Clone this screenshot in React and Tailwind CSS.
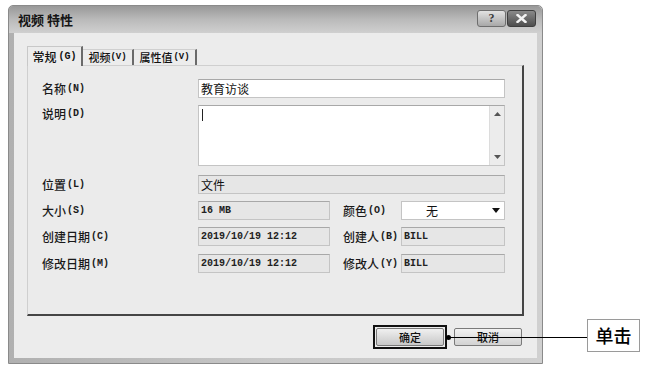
import React from 'react';

const cjk = { fontFamily: '"Noto Sans CJK SC", "Noto Sans", sans-serif' };
const mono = { fontFamily: '"Liberation Mono", "Noto Sans CJK SC", monospace' };

function Label({ text, hint, className = '' }) {
  return (
    <div className={`text-[12px] font-medium text-[#1a1a1a] leading-none flex items-center ${className}`} style={cjk}>
      <span>{text}</span>
      <span className="text-[10px] font-bold ml-[1px]" style={mono}>{hint}</span>
    </div>
  );
}

function Field({ value, white, w, monoText, center }) {
  return (
    <div
      className={`h-[19px] ${w} border border-[#c4c4c4] border-t-[#a8a8a8] flex items-center px-[2px] text-[#111] ${
        white ? 'bg-white' : 'bg-[#e6e6e6]'
      } ${center ? 'justify-center' : ''}`}
      style={monoText ? mono : cjk}
    >
      <span className={monoText ? 'text-[10px] font-bold text-[#222]' : 'text-[12px]'}>{value}</span>
    </div>
  );
}

export default function App() {
  return (
    <div className="relative w-[650px] h-[372px] bg-white overflow-hidden pt-[5px] pl-[8px]">
      {/* dialog window */}
      <div className="w-[535px] h-[359px] flex flex-col border border-[#8a8a8a] rounded-t-[5px] bg-gradient-to-r from-[#b0b0b0] via-[#c8c8c8] to-[#d0d0d0]">
        {/* title bar */}
        <div className="h-[27px] flex items-center justify-between pl-[9px] pr-[6px] rounded-t-[5px] bg-gradient-to-b from-[#989898] via-[#bababa] to-[#d0d0d0]">
          <span className="text-[13px] font-semibold text-[#151515]" style={cjk}>视频 特性</span>
          <div className="flex items-center gap-[1px] mt-[-3px]">
            <div className="w-[29px] h-[17px] rounded-[3px] border border-[#6e6e6e] bg-gradient-to-b from-[#e2e2e2] to-[#a8a8a8] flex items-center justify-center">
              <span className="text-[12px] font-bold text-[#3a3a3a] leading-none" style={{ fontFamily: '"Liberation Serif", serif' }}>?</span>
            </div>
            <div className="w-[29px] h-[17px] rounded-[3px] border border-[#3e3e3e] bg-gradient-to-b from-[#8a8a8a] to-[#4e4e4e] flex items-center justify-center">
              <svg width="11" height="9" viewBox="0 0 11 9">
                <path d="M1.5 1 L9.5 8 M9.5 1 L1.5 8" stroke="#f4f4f4" strokeWidth="2.4" strokeLinecap="square" />
              </svg>
            </div>
          </div>
        </div>

        {/* client area */}
        <div className="flex-1 mx-[5px] mb-[5px] bg-[#ececec] px-[13px] pt-[13px] flex flex-col">
          {/* tabs */}
          <div className="h-[19px] flex items-end" style={cjk}>
            <div className="h-[20px] w-[56px] border-t border-l border-[#c8c8c8] border-r-2 border-r-[#6a6a6a] bg-[#ececec] flex items-center justify-center text-[12px] font-medium text-[#111] mb-[-1px] relative z-10">
              常规<span className="text-[10px] font-bold ml-[2px]" style={mono}>(G)</span>
            </div>
            <div className="h-[16px] w-[51px] border-t border-[#d0d0d0] border-r-2 border-r-[#6a6a6a] flex items-center justify-center text-[11px] font-medium text-[#111]">
              视频<span className="text-[9px] font-bold" style={mono}>(V)</span>
            </div>
            <div className="h-[16px] w-[63px] border-t border-[#d0d0d0] border-r-2 border-r-[#6a6a6a] flex items-center justify-center text-[11px] font-medium text-[#111]">
              属性值<span className="text-[9px] font-bold ml-[1px]" style={mono}>(V)</span>
            </div>
          </div>

          {/* tab panel */}
          <div className="h-[251px] border-l border-t border-[#cfcfcf] border-r-2 border-r-[#454545] border-b-2 border-b-[#454545] bg-[#ebebeb] pl-[14px] pt-[13px] flex flex-col">
            <div className="flex items-center">
              <Label text="名称" hint="(N)" className="w-[156px]" />
              <Field value="教育访谈" white w="w-[307px]" />
            </div>

            <div className="flex items-start mt-[7px]">
              <Label text="说明" hint="(D)" className="w-[156px] pt-[3px]" />
              <div className="w-[307px] h-[61px] bg-white border border-[#c4c4c4] border-t-[#a8a8a8] flex">
                <div className="flex-1 pl-[3px] pt-[3px]">
                  <div className="w-[1px] h-[12px] bg-[#222]" />
                </div>
                <div className="w-[15px] bg-[#ececec] border-l border-[#dcdcdc] flex flex-col items-center justify-between py-[6px]">
                  <svg width="7" height="4" viewBox="0 0 7 4"><path d="M0 4 L3.5 0 L7 4 Z" fill="#555" /></svg>
                  <svg width="7" height="4" viewBox="0 0 7 4"><path d="M0 0 L3.5 4 L7 0 Z" fill="#555" /></svg>
                </div>
              </div>
            </div>

            <div className="flex items-center mt-[9px]">
              <Label text="位置" hint="(L)" className="w-[156px]" />
              <Field value="文件" w="w-[307px]" />
            </div>

            <div className="flex items-center mt-[7px]">
              <Label text="大小" hint="(S)" className="w-[156px]" />
              <Field value="16 MB" w="w-[132px]" monoText />
              <Label text="颜色" hint="(O)" className="w-[58px] ml-[13px]" />
              <div className="w-[104px] h-[19px] bg-white border border-[#c4c4c4] flex items-center justify-between pl-[24px] pr-[4px]">
                <span className="text-[12px] text-[#111]" style={cjk}>无</span>
                <svg width="8" height="5" viewBox="0 0 8 5"><path d="M0 0 L4 5 L8 0 Z" fill="#111" /></svg>
              </div>
            </div>

            <div className="flex items-center mt-[7px]">
              <Label text="创建日期" hint="(C)" className="w-[156px]" />
              <Field value="2019/10/19 12:12" w="w-[132px]" monoText />
              <Label text="创建人" hint="(B)" className="w-[58px] ml-[13px]" />
              <Field value="BILL" w="w-[104px]" monoText />
            </div>

            <div className="flex items-center mt-[8px]">
              <Label text="修改日期" hint="(M)" className="w-[156px]" />
              <Field value="2019/10/19 12:12" w="w-[132px]" monoText />
              <Label text="修改人" hint="(Y)" className="w-[58px] ml-[13px]" />
              <Field value="BILL" w="w-[104px]" monoText />
            </div>
          </div>

          {/* buttons */}
          <div className="flex items-center justify-end mt-[9px] pr-[2px] gap-[7px]" style={cjk}>
            <div className="w-[74px] h-[24px] border-2 border-[#111] p-[1px]">
              <div className="w-full h-full rounded-[2px] border border-[#7a7a7a] bg-gradient-to-b from-[#f0f0f0] to-[#c8c8c8] flex items-center justify-center text-[11px] font-medium text-[#111]">
                确定
              </div>
            </div>
            <div className="w-[68px] h-[18px] rounded-[2px] border border-[#7a7a7a] bg-gradient-to-b from-[#f2f2f2] to-[#d2d2d2] flex items-center justify-center text-[11px] font-medium text-[#111]">
              取消
            </div>
          </div>
        </div>
      </div>

      {/* callout annotation */}
      <div className="absolute left-[446px] top-[335px] w-[5px] h-[5px] rounded-full bg-black" />
      <div className="absolute left-[448px] top-[337px] w-[139px] h-[1px] bg-black" />
      <div
        className="absolute left-[587px] top-[319px] w-[53px] h-[33px] bg-white border border-[#9a9a9a] flex items-center justify-center text-[18px] font-medium text-black"
        style={cjk}
      >
        单击
      </div>
    </div>
  );
}
